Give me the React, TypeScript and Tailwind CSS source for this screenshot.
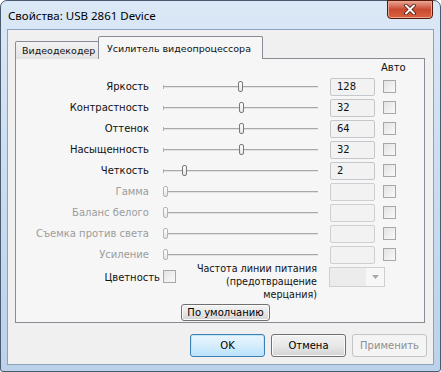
import React from "react";

type Row = { label: string; value?: string; thumb: number; enabled: boolean };

const rows: Row[] = [
  { label: "Яркость", value: "128", thumb: 75, enabled: true },
  { label: "Контрастность", value: "32", thumb: 76, enabled: true },
  { label: "Оттенок", value: "64", thumb: 76, enabled: true },
  { label: "Насыщенность", value: "32", thumb: 76, enabled: true },
  { label: "Четкость", value: "2", thumb: 19, enabled: true },
  { label: "Гамма", thumb: 0, enabled: false },
  { label: "Баланс белого", thumb: 0, enabled: false },
  { label: "Съемка против света", thumb: 0, enabled: false },
  { label: "Усиление", thumb: 0, enabled: false },
];

function Checkbox() {
  return (
    <div className="w-[13px] h-[13px] border border-[#a7a7a7] bg-gradient-to-br from-[#e3e3e3] to-[#fafafa] shrink-0" />
  );
}

function Slider({ thumb, enabled }: { thumb: number; enabled: boolean }) {
  return (
    <div className="relative w-[155px] h-[21px] shrink-0">
      <div className="absolute left-0 right-0 top-[10px] h-[1px] bg-[#a9a9a9]" />
      <div className="absolute left-0 right-0 top-[11px] h-[1px] bg-[#e2e2e2]" />
      <div className="absolute left-0 top-[9px] w-[1px] h-[4px] bg-[#b0b0b0]" />
      <div
        className={
          "absolute top-[5px] w-[5px] h-[11px] rounded-[2px] border bg-gradient-to-b from-[#ffffff] to-[#e4e4e4] " +
          (enabled ? "border-[#7a7a7a]" : "border-[#b4b4b4]")
        }
        style={{ left: thumb }}
      />
    </div>
  );
}

function Button({
  children,
  kind = "normal",
  className = "",
}: {
  children: React.ReactNode;
  kind?: "normal" | "default" | "disabled";
  className?: string;
}) {
  const base =
    "flex items-center justify-center rounded-[3px] border shrink-0 " + className + " ";
  if (kind === "default")
    return (
      <div className={base + "border-[#3c7fb1] bg-gradient-to-b from-[#e9f5fd] via-[#d6eefc] to-[#b9e1fb] text-black shadow-[inset_0_0_0_1px_#bfe6fb]"}>
        {children}
      </div>
    );
  if (kind === "disabled")
    return (
      <div className={base + "border-[#c2c4c6] bg-[#f4f4f4] text-[#8e8e8e]"}>{children}</div>
    );
  return (
    <div className={base + "border-[#707070] bg-gradient-to-b from-[#f2f2f2] via-[#e8e8e8] to-[#d3d3d3] text-black shadow-[inset_0_0_0_1px_#fbfbfb]"}>
      {children}
    </div>
  );
}

export default function App() {
  return (
    <div className="w-[441px] h-[372px] bg-white font-['DejaVu_Sans',Verdana,sans-serif] text-[10px] leading-[13px] text-[#111]">
      <div className="relative w-[441px] h-[372px] flex flex-col rounded-t-[7px] rounded-b-[3px] border border-[#4a5b70] bg-gradient-to-b from-[#dbe8f6] via-[#c9dcf1] to-[#bcd2eb] px-[6px] pb-[6px]">
        <div className="h-[28px] flex items-center pl-[1px] font-['Noto_Sans',sans-serif] text-[11.5px] text-[#000]">
          Свойства: USB 2861 Device
        </div>
        <div className="absolute top-[-1px] right-[7px] w-[46px] h-[19px] rounded-b-[4px] border border-[#57180e] bg-gradient-to-b from-[#e8a493] via-[#c94a31] to-[#d9633f] flex items-center justify-center shadow-[inset_0_0_0_1px_#eca58f]">
          <svg width="12" height="11" viewBox="0 0 12 11">
            <path d="M2 1.5 L10 9.5 M10 1.5 L2 9.5" stroke="#4a1208" strokeWidth="3.6" strokeLinecap="round" />
            <path d="M2 1.5 L10 9.5 M10 1.5 L2 9.5" stroke="#ffffff" strokeWidth="2" strokeLinecap="round" />
          </svg>
        </div>
        <div className="flex-1 border border-[#8ba3bf] bg-[#f0f0f0] flex flex-col pl-[7px] pt-[5px]">
          {/* tabs */}
          <div className="flex items-end h-[23px] relative z-10 text-[9.5px]">
            <div className="h-[18px] w-[84px] border border-b-0 border-[#898c95] rounded-t-[2px] bg-gradient-to-b from-[#f3f3f3] to-[#e2e2e2] flex items-center pl-[6px] mb-[-1px] whitespace-nowrap">
              Видеодекодер
            </div>
            <div className="h-[23px] w-[165px] ml-[-1px] border border-b-0 border-[#898c95] rounded-t-[2px] bg-[#f6f6f6] flex items-start pt-[5px] pl-[8px] mb-[-1px] whitespace-nowrap">
              Усилитель видеопроцессора
            </div>
          </div>
          {/* panel */}
          <div className="w-[410px] h-[265px] border border-[#898c95] bg-[#f6f6f6] flex flex-col">
            <div className="h-[17px] flex items-center pl-[365px]">Авто</div>
            {rows.map((r) => (
              <div key={r.label} className="h-[21px] flex items-center">
                <div
                  className={
                    "w-[133px] text-right shrink-0 whitespace-nowrap " + (r.enabled ? "" : "text-[#9c9c9c]")
                  }
                >
                  {r.label}
                </div>
                <div className="ml-[14px]">
                  <Slider thumb={r.thumb} enabled={r.enabled} />
                </div>
                <div
                  className={
                    "ml-[12px] w-[45px] h-[18px] rounded-[2px] border bg-[#f2f2f2] flex items-center pl-[6px] shrink-0 " +
                    (r.enabled ? "border-[#c3c6cb]" : "border-[#cdcfd2]")
                  }
                >
                  {r.value ?? ""}
                </div>
                <div className="ml-[8px]">
                  <Checkbox />
                </div>
              </div>
            ))}
            <div className="flex items-start mt-[-3px]">
              <div className="w-[144px] text-right mt-[9px] shrink-0">Цветность</div>
              <div className="ml-[3px] mt-[8px]">
                <Checkbox />
              </div>
              <div className="w-[141px] text-right shrink-0 whitespace-nowrap text-[9.6px]">
                Частота линии питания
                <br />
                (предотвращение
                <br />
                мерцания)
              </div>
              <div className="ml-[12px] mt-[5px] w-[56px] h-[20px] border border-[#cdcfd2] bg-[#f7f7f7] flex shrink-0">
                <div className="w-[36px] h-full bg-[#ececec]" />
                <div className="flex-1 flex items-center justify-center">
                  <svg width="7" height="4" viewBox="0 0 7 4">
                    <path d="M0 0 L7 0 L3.5 4 Z" fill="#a8a8a8" />
                  </svg>
                </div>
              </div>
            </div>
            <div className="mt-[3px] ml-[165px]">
              <Button className="w-[89px] h-[17px]">По умолчанию</Button>
            </div>
          </div>
          {/* bottom buttons */}
          <div className="flex justify-end gap-[6px] mt-[11px] pr-[6px]">
            <Button kind="default" className="w-[75px] h-[23px]">OK</Button>
            <Button className="w-[75px] h-[23px]">Отмена</Button>
            <Button kind="disabled" className="w-[75px] h-[23px]">Применить</Button>
          </div>
        </div>
      </div>
    </div>
  );
}
